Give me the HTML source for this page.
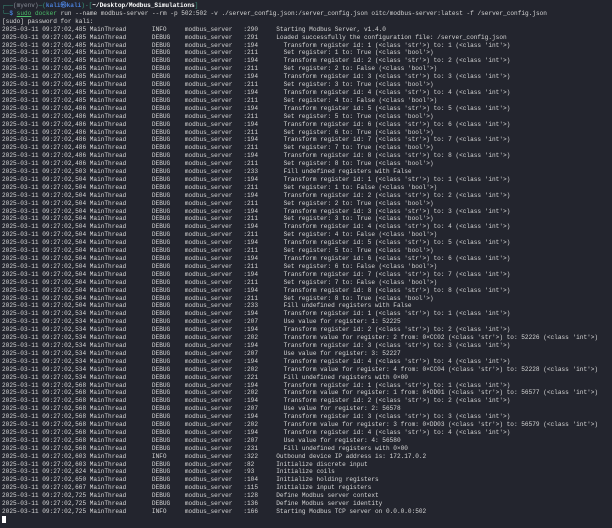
<!DOCTYPE html>
<html><head><meta charset="utf-8"><style>
html,body{margin:0;padding:0;background:#23252e;width:612px;height:528px;overflow:hidden}
pre{margin:0;padding:2px 0 0 2px;font-family:"Liberation Mono",monospace;font-size:6.1px;line-height:7.9px;color:#d6d6d6;white-space:pre}
.g{color:#3a9a7e}.b{color:#4a7fd8;font-weight:bold}.w{color:#fff;font-weight:bold}.d{color:#8a8f99}.gr{color:#4cbf6a}
.cur{display:inline-block;width:4px;height:7px;background:#fff;vertical-align:-1px}
</style></head><body><pre><span class="g">┌──</span><span class="d">(myenv)</span><span class="g">─(</span><span class="b">kali㉿kali</span><span class="g">)-[</span><span class="w">~/Desktop/Modbus_Simulations</span><span class="g">]</span>
<span class="g">└─</span><span class="b">$</span> <span class="gr" style="text-decoration:underline">sudo</span> <span class="gr">docker</span> run --name modbus-server --rm -p 502:502 -v ./server_config.json:/server_config.json oitc/modbus-server:latest -f /server_config.json
[sudo] password for kali:
2025-03-11 09:27:02,485 MainThread       INFO     modbus_server   :290     Starting Modbus Server, v1.4.0
2025-03-11 09:27:02,485 MainThread       DEBUG    modbus_server   :291     Loaded successfully the configuration file: /server_config.json
2025-03-11 09:27:02,485 MainThread       DEBUG    modbus_server   :194       Transform register id: 1 (&lt;class 'str'&gt;) to: 1 (&lt;class 'int'&gt;)
2025-03-11 09:27:02,485 MainThread       DEBUG    modbus_server   :211       Set register: 1 to: True (&lt;class 'bool'&gt;)
2025-03-11 09:27:02,485 MainThread       DEBUG    modbus_server   :194       Transform register id: 2 (&lt;class 'str'&gt;) to: 2 (&lt;class 'int'&gt;)
2025-03-11 09:27:02,485 MainThread       DEBUG    modbus_server   :211       Set register: 2 to: False (&lt;class 'bool'&gt;)
2025-03-11 09:27:02,485 MainThread       DEBUG    modbus_server   :194       Transform register id: 3 (&lt;class 'str'&gt;) to: 3 (&lt;class 'int'&gt;)
2025-03-11 09:27:02,485 MainThread       DEBUG    modbus_server   :211       Set register: 3 to: True (&lt;class 'bool'&gt;)
2025-03-11 09:27:02,485 MainThread       DEBUG    modbus_server   :194       Transform register id: 4 (&lt;class 'str'&gt;) to: 4 (&lt;class 'int'&gt;)
2025-03-11 09:27:02,485 MainThread       DEBUG    modbus_server   :211       Set register: 4 to: False (&lt;class 'bool'&gt;)
2025-03-11 09:27:02,486 MainThread       DEBUG    modbus_server   :194       Transform register id: 5 (&lt;class 'str'&gt;) to: 5 (&lt;class 'int'&gt;)
2025-03-11 09:27:02,486 MainThread       DEBUG    modbus_server   :211       Set register: 5 to: True (&lt;class 'bool'&gt;)
2025-03-11 09:27:02,486 MainThread       DEBUG    modbus_server   :194       Transform register id: 6 (&lt;class 'str'&gt;) to: 6 (&lt;class 'int'&gt;)
2025-03-11 09:27:02,486 MainThread       DEBUG    modbus_server   :211       Set register: 6 to: True (&lt;class 'bool'&gt;)
2025-03-11 09:27:02,486 MainThread       DEBUG    modbus_server   :194       Transform register id: 7 (&lt;class 'str'&gt;) to: 7 (&lt;class 'int'&gt;)
2025-03-11 09:27:02,486 MainThread       DEBUG    modbus_server   :211       Set register: 7 to: True (&lt;class 'bool'&gt;)
2025-03-11 09:27:02,486 MainThread       DEBUG    modbus_server   :194       Transform register id: 8 (&lt;class 'str'&gt;) to: 8 (&lt;class 'int'&gt;)
2025-03-11 09:27:02,486 MainThread       DEBUG    modbus_server   :211       Set register: 8 to: True (&lt;class 'bool'&gt;)
2025-03-11 09:27:02,503 MainThread       DEBUG    modbus_server   :233       Fill undefined registers with False
2025-03-11 09:27:02,504 MainThread       DEBUG    modbus_server   :194       Transform register id: 1 (&lt;class 'str'&gt;) to: 1 (&lt;class 'int'&gt;)
2025-03-11 09:27:02,504 MainThread       DEBUG    modbus_server   :211       Set register: 1 to: False (&lt;class 'bool'&gt;)
2025-03-11 09:27:02,504 MainThread       DEBUG    modbus_server   :194       Transform register id: 2 (&lt;class 'str'&gt;) to: 2 (&lt;class 'int'&gt;)
2025-03-11 09:27:02,504 MainThread       DEBUG    modbus_server   :211       Set register: 2 to: True (&lt;class 'bool'&gt;)
2025-03-11 09:27:02,504 MainThread       DEBUG    modbus_server   :194       Transform register id: 3 (&lt;class 'str'&gt;) to: 3 (&lt;class 'int'&gt;)
2025-03-11 09:27:02,504 MainThread       DEBUG    modbus_server   :211       Set register: 3 to: True (&lt;class 'bool'&gt;)
2025-03-11 09:27:02,504 MainThread       DEBUG    modbus_server   :194       Transform register id: 4 (&lt;class 'str'&gt;) to: 4 (&lt;class 'int'&gt;)
2025-03-11 09:27:02,504 MainThread       DEBUG    modbus_server   :211       Set register: 4 to: False (&lt;class 'bool'&gt;)
2025-03-11 09:27:02,504 MainThread       DEBUG    modbus_server   :194       Transform register id: 5 (&lt;class 'str'&gt;) to: 5 (&lt;class 'int'&gt;)
2025-03-11 09:27:02,504 MainThread       DEBUG    modbus_server   :211       Set register: 5 to: True (&lt;class 'bool'&gt;)
2025-03-11 09:27:02,504 MainThread       DEBUG    modbus_server   :194       Transform register id: 6 (&lt;class 'str'&gt;) to: 6 (&lt;class 'int'&gt;)
2025-03-11 09:27:02,504 MainThread       DEBUG    modbus_server   :211       Set register: 6 to: False (&lt;class 'bool'&gt;)
2025-03-11 09:27:02,504 MainThread       DEBUG    modbus_server   :194       Transform register id: 7 (&lt;class 'str'&gt;) to: 7 (&lt;class 'int'&gt;)
2025-03-11 09:27:02,504 MainThread       DEBUG    modbus_server   :211       Set register: 7 to: False (&lt;class 'bool'&gt;)
2025-03-11 09:27:02,504 MainThread       DEBUG    modbus_server   :194       Transform register id: 8 (&lt;class 'str'&gt;) to: 8 (&lt;class 'int'&gt;)
2025-03-11 09:27:02,504 MainThread       DEBUG    modbus_server   :211       Set register: 8 to: True (&lt;class 'bool'&gt;)
2025-03-11 09:27:02,504 MainThread       DEBUG    modbus_server   :233       Fill undefined registers with False
2025-03-11 09:27:02,534 MainThread       DEBUG    modbus_server   :194       Transform register id: 1 (&lt;class 'str'&gt;) to: 1 (&lt;class 'int'&gt;)
2025-03-11 09:27:02,534 MainThread       DEBUG    modbus_server   :207       Use value for register: 1: 52225
2025-03-11 09:27:02,534 MainThread       DEBUG    modbus_server   :194       Transform register id: 2 (&lt;class 'str'&gt;) to: 2 (&lt;class 'int'&gt;)
2025-03-11 09:27:02,534 MainThread       DEBUG    modbus_server   :202       Transform value for register: 2 from: 0×CC02 (&lt;class 'str'&gt;) to: 52226 (&lt;class 'int'&gt;)
2025-03-11 09:27:02,534 MainThread       DEBUG    modbus_server   :194       Transform register id: 3 (&lt;class 'str'&gt;) to: 3 (&lt;class 'int'&gt;)
2025-03-11 09:27:02,534 MainThread       DEBUG    modbus_server   :207       Use value for register: 3: 52227
2025-03-11 09:27:02,534 MainThread       DEBUG    modbus_server   :194       Transform register id: 4 (&lt;class 'str'&gt;) to: 4 (&lt;class 'int'&gt;)
2025-03-11 09:27:02,534 MainThread       DEBUG    modbus_server   :202       Transform value for register: 4 from: 0×CC04 (&lt;class 'str'&gt;) to: 52228 (&lt;class 'int'&gt;)
2025-03-11 09:27:02,534 MainThread       DEBUG    modbus_server   :221       Fill undefined registers with 0×00
2025-03-11 09:27:02,568 MainThread       DEBUG    modbus_server   :194       Transform register id: 1 (&lt;class 'str'&gt;) to: 1 (&lt;class 'int'&gt;)
2025-03-11 09:27:02,568 MainThread       DEBUG    modbus_server   :202       Transform value for register: 1 from: 0×DD01 (&lt;class 'str'&gt;) to: 56577 (&lt;class 'int'&gt;)
2025-03-11 09:27:02,568 MainThread       DEBUG    modbus_server   :194       Transform register id: 2 (&lt;class 'str'&gt;) to: 2 (&lt;class 'int'&gt;)
2025-03-11 09:27:02,568 MainThread       DEBUG    modbus_server   :207       Use value for register: 2: 56578
2025-03-11 09:27:02,568 MainThread       DEBUG    modbus_server   :194       Transform register id: 3 (&lt;class 'str'&gt;) to: 3 (&lt;class 'int'&gt;)
2025-03-11 09:27:02,568 MainThread       DEBUG    modbus_server   :202       Transform value for register: 3 from: 0×DD03 (&lt;class 'str'&gt;) to: 56579 (&lt;class 'int'&gt;)
2025-03-11 09:27:02,568 MainThread       DEBUG    modbus_server   :194       Transform register id: 4 (&lt;class 'str'&gt;) to: 4 (&lt;class 'int'&gt;)
2025-03-11 09:27:02,568 MainThread       DEBUG    modbus_server   :207       Use value for register: 4: 56580
2025-03-11 09:27:02,568 MainThread       DEBUG    modbus_server   :231       Fill undefined registers with 0×00
2025-03-11 09:27:02,603 MainThread       INFO     modbus_server   :322     Outbound device IP address is: 172.17.0.2
2025-03-11 09:27:02,603 MainThread       DEBUG    modbus_server   :82      Initialize discrete input
2025-03-11 09:27:02,624 MainThread       DEBUG    modbus_server   :93      Initialize coils
2025-03-11 09:27:02,650 MainThread       DEBUG    modbus_server   :104     Initialize holding registers
2025-03-11 09:27:02,667 MainThread       DEBUG    modbus_server   :115     Initialize input registers
2025-03-11 09:27:02,725 MainThread       DEBUG    modbus_server   :128     Define Modbus server context
2025-03-11 09:27:02,725 MainThread       DEBUG    modbus_server   :136     Define Modbus server identity
2025-03-11 09:27:02,725 MainThread       INFO     modbus_server   :166     Starting Modbus TCP server on 0.0.0.0:502
<span class="cur"></span></pre></body></html>
